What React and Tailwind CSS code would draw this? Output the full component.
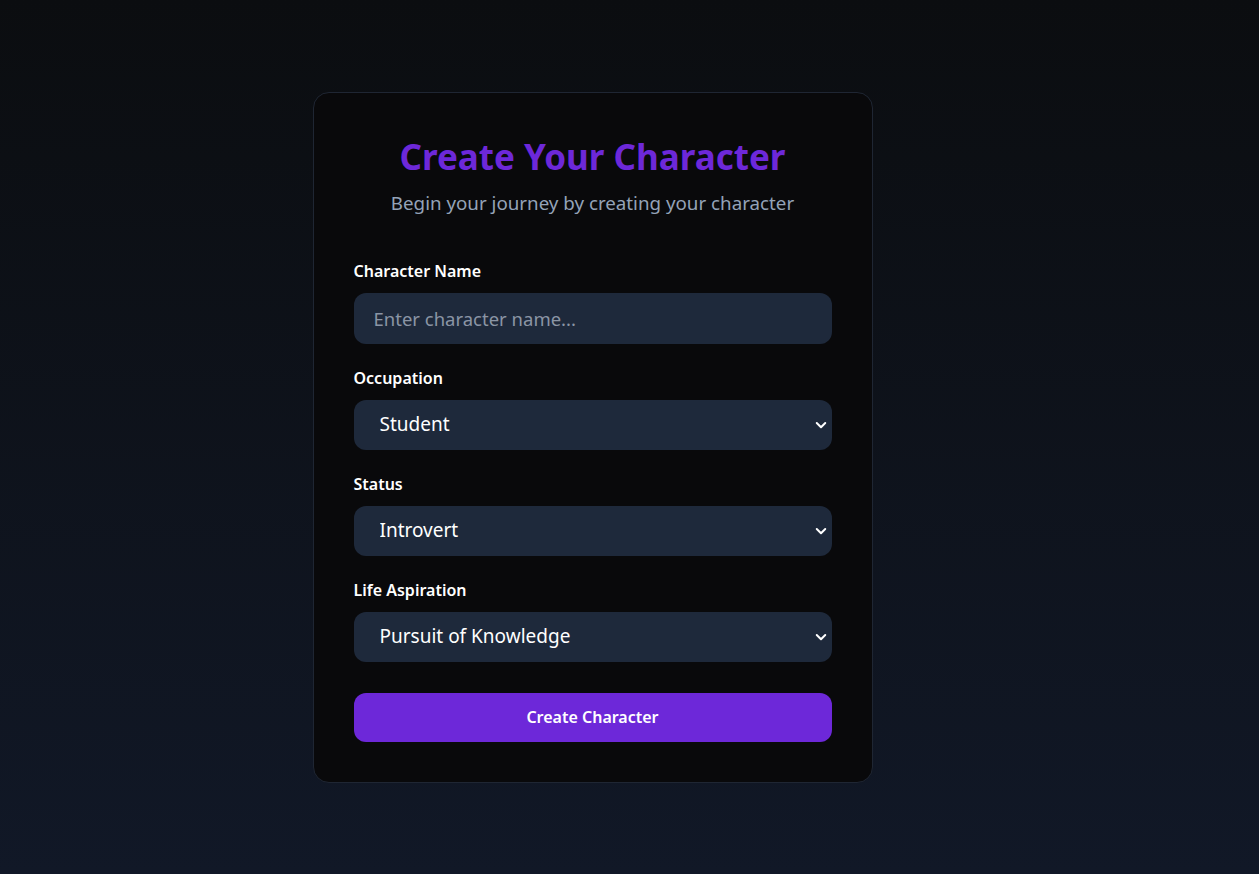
import { useState } from "react";

const Chevron = () => (
  <svg
    className="pointer-events-none absolute right-[5px] top-1/2 -translate-y-1/2"
    width="12"
    height="12"
    viewBox="0 0 12 12"
    fill="none"
  >
    <path d="M1.75 4 6 8.25 10.25 4" stroke="#ffffff" strokeWidth="2" strokeLinecap="round" strokeLinejoin="round" />
  </svg>
);

const SelectField = ({ label, value, setValue, options }) => {
  return (
    <div>
      <label className="block text-[16px] leading-6 font-semibold text-white mb-[10px]">{label}</label>
      <div className="relative">
        <select
          className="w-full h-[50px] appearance-none bg-[#1e293b] rounded-xl pl-[26px] pr-10 text-[19px] text-white outline-none"
          value={value}
          onChange={(e) => setValue(e.target.value)}
        >
          {options.map((opt) => (
            <option key={opt}>{opt}</option>
          ))}
        </select>
        <Chevron />
      </div>
    </div>
  );
};

const App = () => {
  const [name, setName] = useState("");
  const [occupation, setOccupation] = useState("Student");
  const [status, setStatus] = useState("Introvert");
  const [aspiration, setAspiration] = useState("Pursuit of Knowledge");

  return (
    <div
      className="min-h-screen w-full flex items-center justify-center pr-[74px] bg-gradient-to-b from-[#0b0d10] to-[#111827]"
      style={{ fontFamily: '"Noto Sans", "Open Sans", sans-serif' }}
    >
      <div className="w-[560px] bg-[#09090b] border border-[#1f2633] rounded-2xl p-10">
        <div className="text-center mb-[42px]">
          <h1 className="text-[35px] leading-10 font-bold text-[#6d28d9] mt-1">Create Your Character</h1>
          <p className="text-[18.75px] leading-7 text-[#94a3b8] mt-3">Begin your journey by creating your character</p>
        </div>

        <div className="flex flex-col gap-[22px]">
          <div>
            <label className="block text-[16px] leading-6 font-semibold text-white mb-[10px]">Character Name</label>
            <input
              className="w-full h-[51px] bg-[#1e293b] rounded-xl px-5 text-[18.5px] text-white placeholder:text-[#8b95a5] outline-none"
              placeholder="Enter character name..."
              value={name}
              onChange={(e) => setName(e.target.value)}
            />
          </div>

          <SelectField
            label="Occupation"
            value={occupation}
            setValue={setOccupation}
            options={["Student", "Artist", "Engineer", "Merchant"]}
          />
          <SelectField
            label="Status"
            value={status}
            setValue={setStatus}
            options={["Introvert", "Extrovert", "Ambivert"]}
          />
          <SelectField
            label="Life Aspiration"
            value={aspiration}
            setValue={setAspiration}
            options={["Pursuit of Knowledge", "Wealth", "Family", "Fame"]}
          />

          <button className="mt-[9px] w-full h-[49px] bg-[#6d28d9] rounded-xl text-[16px] font-semibold text-white cursor-pointer">
            Create Character
          </button>
        </div>
      </div>
    </div>
  );
};

export default App;
